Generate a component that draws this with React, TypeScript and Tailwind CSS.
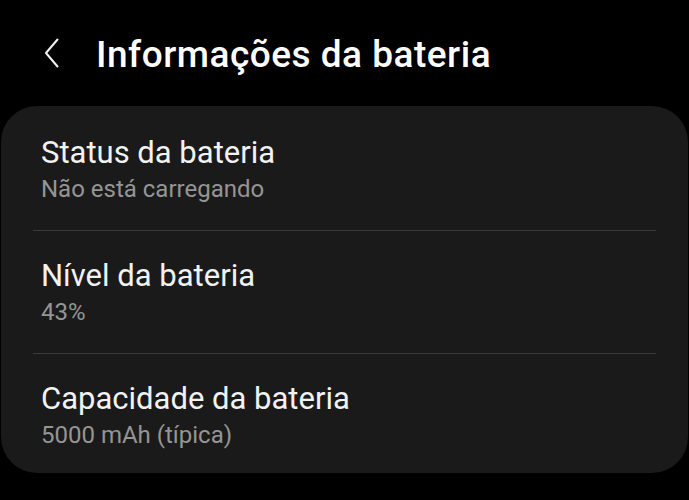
import { ReactNode } from 'react';

function InfoRow({ title, value }: { title: string; value: ReactNode }) {
  return (
    <div className="flex flex-col justify-center h-[122px] shrink-0 px-[40px]">
      <div className="text-[31px] leading-[36px] text-[#f2f2f2]">{title}</div>
      <div className="text-[24px] leading-[28px] text-[#959595] mt-[4px]">{value}</div>
    </div>
  );
}

export default function App() {
  return (
    <div
      className="w-[689px] h-[500px] bg-black overflow-hidden"
      style={{ fontFamily: 'Roboto, "Noto Sans", sans-serif' }}
    >
      {/* Header */}
      <div className="flex items-start h-[106px] pl-[44px] pt-[36px]">
        <svg viewBox="0 0 15 30" className="w-[15px] h-[30px] mt-[2px]" fill="none" stroke="#f2f2f2" strokeWidth="2" strokeLinecap="round" strokeLinejoin="round">
          <path d="M13.5 1.5 L2 15 L13.5 28.5" />
        </svg>
        <h1 className="ml-[37px] text-[37px] leading-none font-medium text-white tracking-[0.5px]">
          Informações da bateria
        </h1>
      </div>

      {/* Card */}
      <div className="mx-px bg-[#1a1a1a] rounded-[36px] h-[367px] pt-[2px] flex flex-col overflow-hidden">
        <InfoRow title="Status da bateria" value="Não está carregando" />
        <div className="mx-[32px] h-px shrink-0 bg-[#3a3a3a]" />
        <InfoRow title="Nível da bateria" value="43%" />
        <div className="mx-[32px] h-px shrink-0 bg-[#3a3a3a]" />
        <InfoRow title="Capacidade da bateria" value="5000 mAh (típica)" />
      </div>
    </div>
  );
}
